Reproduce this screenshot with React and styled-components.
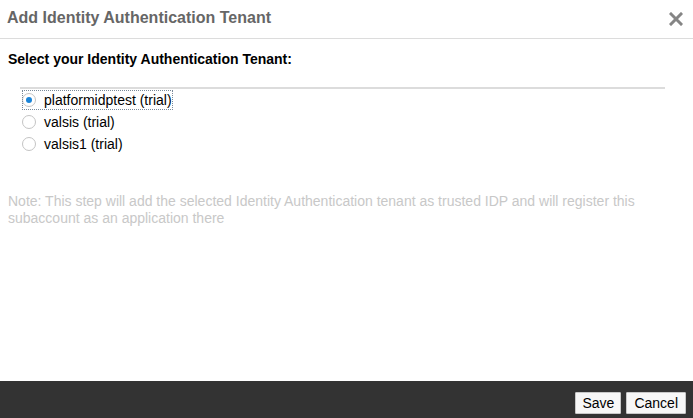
import React, { useState } from "react";
import styled, { createGlobalStyle } from "styled-components";

const Global = createGlobalStyle`
  html, body { margin: 0; padding: 0; background: #fff; }
  body { font-family: "Liberation Sans", Arial, sans-serif; }
`;

const Dialog = styled.div`
  width: 693px;
  height: 418px;
  display: flex;
  flex-direction: column;
  background: #fff;
  overflow: hidden;
`;

const Header = styled.div`
  height: 38px;
  border-bottom: 1px solid #dcdcdc;
  display: flex;
  align-items: center;
  justify-content: space-between;
  padding: 0 9px 0 7px;
  box-sizing: content-box;
`;

const Title = styled.h1`
  margin: 0;
  font-size: 16px;
  font-weight: bold;
  color: #666;
  padding-bottom: 2px;
`;

const Close = styled.button`
  border: 0;
  background: none;
  padding: 0;
  width: 16px;
  height: 16px;
  display: flex;
  align-items: center;
  justify-content: center;
  cursor: pointer;
`;

const Body = styled.div`
  flex: 1;
  padding: 12px 8px 0 8px;
  display: flex;
  flex-direction: column;
`;

const Heading = styled.div`
  font-size: 14px;
  font-weight: bold;
  color: #000;
  line-height: 16px;
`;

const Rule = styled.div`
  height: 2px;
  background: #dcdcdc;
  margin: 20px 20px 0 12px;
`;

const List = styled.div`
  display: flex;
  flex-direction: column;
  padding: 0 0 0 13px;
`;

const Option = styled.label`
  display: flex;
  align-items: center;
  height: 22px;
  font-size: 14px;
  color: #000;
  cursor: pointer;
  width: fit-content;
  padding-right: 2px;
  box-sizing: border-box;
  outline: ${(p) => (p.$focused ? "1px dotted #7a8a9a" : "none")};
  outline-offset: -2px;
`;

const Circle = styled.span`
  width: 14px;
  height: 14px;
  border-radius: 50%;
  border: 1.5px solid #c4c4c4;
  box-sizing: border-box;
  margin: 0 8px 0 1px;
  display: flex;
  align-items: center;
  justify-content: center;
  background: #fff;
  &::after {
    content: "";
    width: 6px;
    height: 6px;
    border-radius: 50%;
    background: #1a84d8;
    display: ${(p) => (p.$checked ? "block" : "none")};
  }
`;

const Note = styled.p`
  margin: 38px 0 0 0;
  font-size: 14px;
  line-height: 17px;
  color: #c8c8c8;
  max-width: 660px;
`;

const Footer = styled.div`
  height: 37px;
  background: #333;
  display: flex;
  justify-content: flex-end;
  align-items: flex-end;
  padding: 0 7px 4px 0;
  box-sizing: border-box;
  gap: 5px;
`;

const Button = styled.button`
  height: 22px;
  padding: 0 ${(p) => p.$pad}px;
  background: #f7f7f7;
  border: 1px solid #c8c8c8;
  border-radius: 1px;
  font-family: "Liberation Sans", Arial, sans-serif;
  font-size: 14px;
  color: #000;
  cursor: pointer;
`;

const tenants = ["platformidptest (trial)", "valsis (trial)", "valsis1 (trial)"];

export default function App() {
  const [sel, setSel] = useState(0);
  return (
    <>
      <Global />
      <Dialog>
        <Header>
          <Title>Add Identity Authentication Tenant</Title>
          <Close aria-label="Close">
            <svg width="14" height="14" viewBox="0 0 14 14">
              <path d="M2 2 L12 12 M12 2 L2 12" stroke="#858585" strokeWidth="3" strokeLinecap="square" />
            </svg>
          </Close>
        </Header>
        <Body>
          <Heading>Select your Identity Authentication Tenant:</Heading>
          <Rule />
          <List>
            {tenants.map((t, i) => (
              <Option key={t} $focused={i === 0} onClick={() => setSel(i)}>
                <Circle $checked={sel === i} />
                {t}
              </Option>
            ))}
          </List>
          <Note>
            Note: This step will add the selected Identity Authentication tenant as trusted IDP and will register this
            subaccount as an application there
          </Note>
        </Body>
        <Footer>
          <Button $pad={6}>Save</Button>
          <Button $pad={7}>Cancel</Button>
        </Footer>
      </Dialog>
    </>
  );
}
